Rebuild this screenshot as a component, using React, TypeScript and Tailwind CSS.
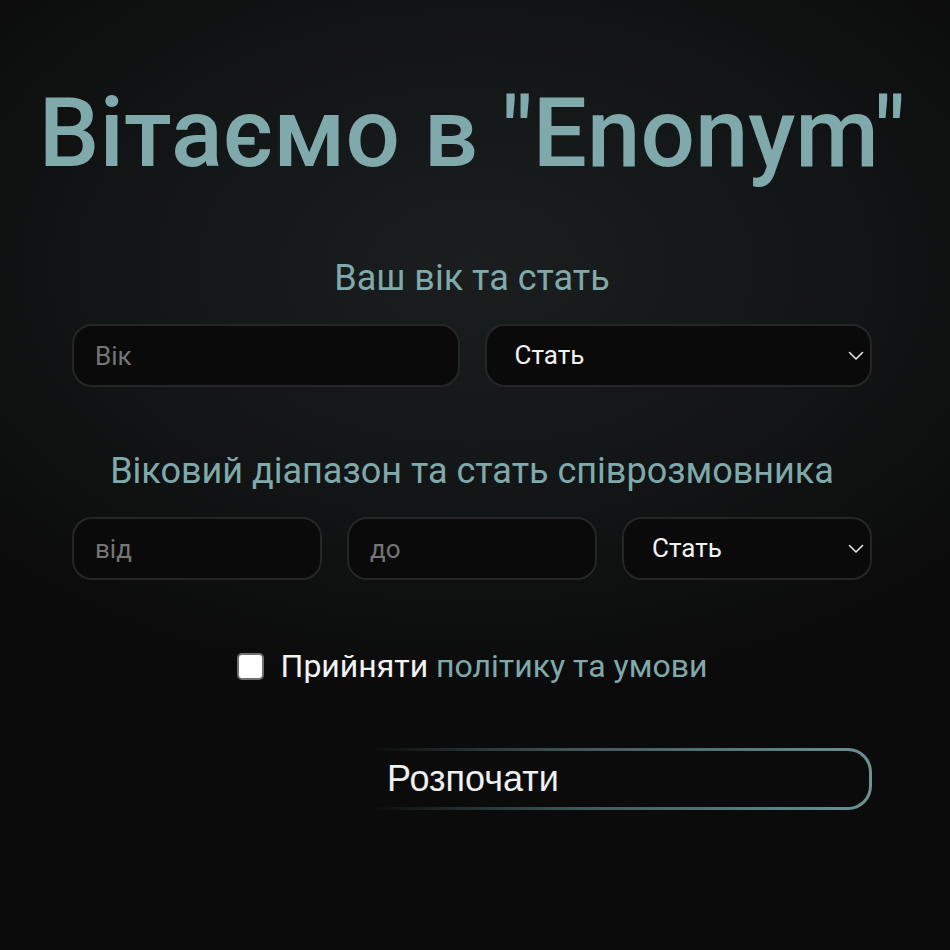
import { useState } from "react";

const TEAL = "text-[#80a9ab]";

function Chevron() {
    return (
        <svg width="16" height="10" viewBox="0 0 16 10" fill="none" className="pointer-events-none absolute right-[8px] top-1/2 -translate-y-1/2">
            <path d="M1.5 1.5 L8 8 L14.5 1.5" stroke="#e5e5e5" strokeWidth="1.6" strokeLinecap="round" strokeLinejoin="round" />
        </svg>
    );
}

function Field({ placeholder }: { placeholder: string }) {
    return (
        <input
            placeholder={placeholder}
            className="h-[63px] w-full rounded-[20px] border-2 border-[#262626] bg-[#0a0a0a] px-[21px] text-[26px] text-white outline-none placeholder:text-[#757575]"
        />
    );
}

function GenderSelect() {
    return (
        <div className="relative w-full">
            <select
                defaultValue=""
                className="h-[63px] w-full appearance-none rounded-[20px] border-2 border-[#262626] bg-[#0a0a0a] pl-[28px] pr-10 text-[26px] text-[#f2f2f2] outline-none"
            >
                <option value="">Стать</option>
                <option value="m">Чоловік</option>
                <option value="f">Жінка</option>
            </select>
            <Chevron />
        </div>
    );
}

export default function App() {
    const [accepted, setAccepted] = useState(false);

    return (
        <div
            className="min-h-[950px] w-full bg-[#0b0b0b] bg-[radial-gradient(ellipse_70%_45%_at_50%_28%,#1a1e1f_0%,#141718_45%,#0b0b0b_100%)] font-['Roboto',sans-serif]"
        >
            <div className="ml-[72px] flex w-[800px] flex-col items-center pt-[78px]">
                {/* Title */}
                <div className="flex w-full justify-center">
                    <h1 className={`whitespace-nowrap text-[96px] font-medium leading-[110px] ${TEAL}`}>
                        Вітаємо в "Enonym"
                    </h1>
                </div>

                {/* Own age and gender */}
                <h2 className={`mt-[70px] text-[36px] leading-[40px] ${TEAL}`}>Ваш вік та стать</h2>
                <div className="mt-[26px] grid w-full grid-cols-2 gap-[25px]">
                    <Field placeholder="Вік" />
                    <GenderSelect />
                </div>

                {/* Partner range */}
                <h2 className={`mt-[64px] whitespace-nowrap text-[36px] leading-[40px] ${TEAL}`}>
                    Віковий діапазон та стать співрозмовника
                </h2>
                <div className="mt-[26px] grid w-full grid-cols-3 gap-[25px]">
                    <Field placeholder="від" />
                    <Field placeholder="до" />
                    <GenderSelect />
                </div>

                {/* Terms */}
                <label className="mt-[66px] flex cursor-pointer items-center gap-[17px] text-[32px] leading-[40px]">
                    <input
                        type="checkbox"
                        checked={accepted}
                        onChange={e => setAccepted(e.target.checked)}
                        className="h-[27px] w-[27px] appearance-none rounded-[5px] border-2 border-[#707070] bg-white checked:bg-[#80a9ab]"
                    />
                    <span className="text-[#f2f2f2]">
                        Прийняти <span className={TEAL}>політику та умови</span>
                    </span>
                </label>

                {/* Submit */}
                <div className="mt-[62px] flex w-full justify-end">
                    <div className="w-[502px] rounded-r-[24px] bg-[linear-gradient(to_right,transparent_0%,#3f5657_40%,#6c9294_100%)] p-[3px]">
                        <button className="flex h-[56px] w-full items-center rounded-r-[21px] bg-[#0b0b0b] pl-[14px] font-['Liberation_Sans',sans-serif] text-[36px] text-[#f0f0f0]">
                            Розпочати
                        </button>
                    </div>
                </div>
            </div>
        </div>
    );
}
